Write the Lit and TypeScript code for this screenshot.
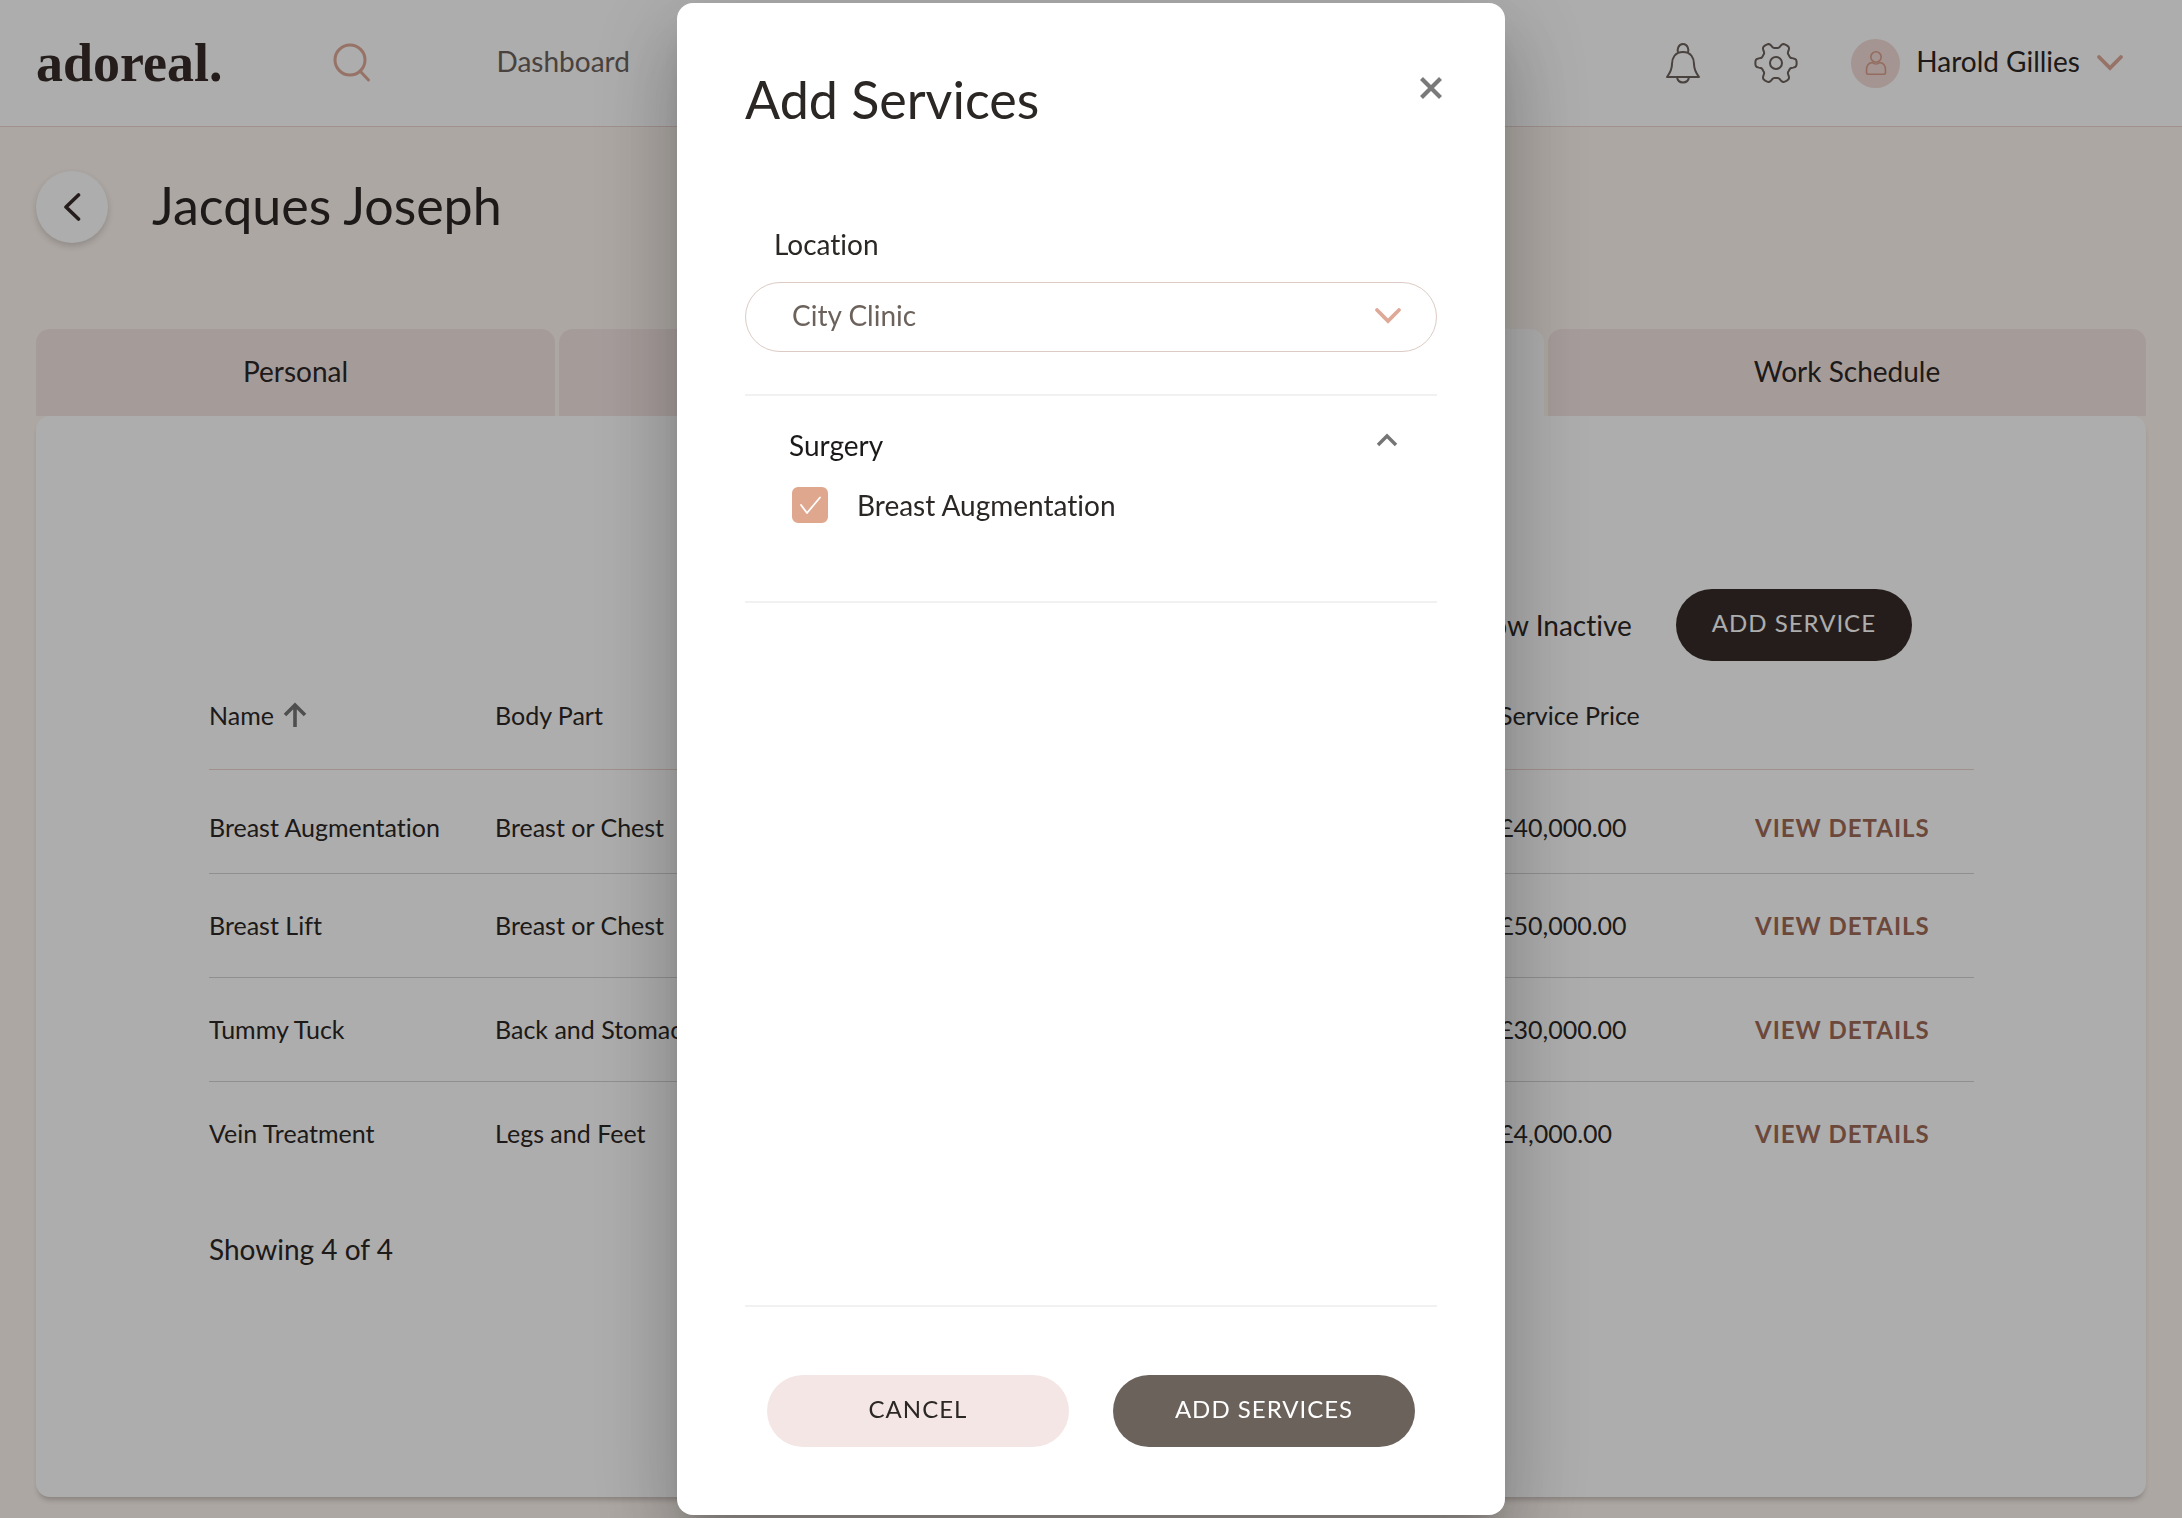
import { LitElement, html, css, svg } from "lit";
import { customElement, property, state } from "lit/decorators.js";

interface Service {
  name: string;
  bodyPart: string;
  price: string;
}

const SERVICES: Service[] = [
  { name: "Breast Augmentation", bodyPart: "Breast or Chest", price: "£40,000.00" },
  { name: "Breast Lift", bodyPart: "Breast or Chest", price: "£50,000.00" },
  { name: "Tummy Tuck", bodyPart: "Back and Stomach", price: "£30,000.00" },
  { name: "Vein Treatment", bodyPart: "Legs and Feet", price: "£4,000.00" },
];

/** Closed outline of a six-lobed gear, centred in a 44 by 44 box. */
function gearOutline(): string {
  const points: string[] = [];
  for (let deg = 0; deg < 360; deg += 3) {
    const a = (deg * Math.PI) / 180;
    const r = 17.8 + 2.9 * Math.tanh(2.2 * Math.cos(6 * a));
    points.push(`${(22 + r * Math.cos(a)).toFixed(2)} ${(22 + r * Math.sin(a)).toFixed(2)}`);
  }
  return `M${points.join("L")}Z`;
}

const icons = {
  search: svg`<svg width="38" height="40" viewBox="0 0 38 40" fill="none" stroke="#dfa997" stroke-width="3" stroke-linecap="round" aria-hidden="true"><circle cx="17" cy="17" r="15"/><path d="M27 28 35.500 37"/></svg>`,
  bell: svg`<svg width="36" height="42" viewBox="0 0 36 42" fill="none" stroke="#6c625c" stroke-width="2" stroke-linejoin="round" aria-hidden="true"><path d="M13 10.500C12 8 13 2 18 2s6 6 5 8.500"/><path d="M18 10C10 10 7 16 7 22c0 6-2 9-5 13h32c-3-4-5-7-5-13 0-6-3-12-11-12Z"/><path d="M12 35c.5 3.500 3 5.500 6 5.500s5.500-2 6-5.500"/></svg>`,
  gear: svg`<svg width="44" height="44" viewBox="0 0 44 44" fill="none" stroke="#6c625c" stroke-width="2" stroke-linejoin="round" aria-hidden="true"><path d=${gearOutline()}/><circle cx="22" cy="22" r="6"/></svg>`,
  user: svg`<svg width="24" height="26" viewBox="0 0 24 26" fill="none" stroke="#d9a08c" stroke-width="1.600" stroke-linejoin="round" aria-hidden="true"><circle cx="12" cy="7" r="5.200"/><path d="M8.200 12.500C4.500 13 2.500 16 2.500 20v2.500c0 1 .8 1.700 1.700 1.700h15.600c.9 0 1.700-.7 1.700-1.700V20c0-4-2-7-5.700-7.500-2.200 2-5.400 2-7.600 0Z"/></svg>`,
  chevronDown: svg`<svg width="28" height="18" viewBox="0 0 28 18" fill="none" stroke="#dfa997" stroke-width="3.800" stroke-linecap="round" aria-hidden="true"><path d="m3 3 11 11L25 3"/></svg>`,
  chevronUp: svg`<svg width="22" height="14" viewBox="0 0 22 14" fill="none" stroke="#757575" stroke-width="3.400" aria-hidden="true"><path d="m2 12 9-9 9 9"/></svg>`,
  back: svg`<svg width="18" height="30" viewBox="0 0 18 30" fill="none" stroke="#372c28" stroke-width="3.600" stroke-linecap="round" stroke-linejoin="round" aria-hidden="true"><path d="M15.500 3 3 15l12.500 12"/></svg>`,
  close: svg`<svg width="24" height="24" viewBox="0 0 24 24" fill="none" stroke="#7a7a7a" stroke-width="4.200" aria-hidden="true"><path d="m2.500 2.500 19 19M21.500 2.500l-19 19"/></svg>`,
  arrowUp: svg`<svg width="24" height="26" viewBox="0 0 24 26" fill="none" stroke="#757575" stroke-width="3.600" aria-hidden="true"><path d="M12 25V4M2 13 12 3l10 10"/></svg>`,
  tick: svg`<svg class="tick" width="36" height="36" viewBox="0 0 36 36" fill="none" stroke="#fff" stroke-width="1.800" stroke-linecap="round" stroke-linejoin="round" aria-hidden="true"><path d="m9 18 6 8L28 10.500"/></svg>`,
};

const base = css`
  :host {
    font-family: Lato, "Liberation Sans", sans-serif;
    font-variant-ligatures: none;
    color: #2b2725;
    font-size: 28px;
    line-height: 36px;
  }
  *,
  *::before,
  *::after {
    box-sizing: border-box;
  }
  svg {
    display: block;
    flex: none;
  }
  button,
  select {
    font: inherit;
    font-variant-ligatures: none;
    color: inherit;
    border: 0;
    padding: 0;
    background: none;
    cursor: pointer;
  }
  h1,
  h2 {
    margin: 0;
    font-size: 52px;
    line-height: 56px;
    font-weight: 400;
  }
  .pill {
    height: 72px;
    border-radius: 36px;
    padding: 0 36px 4px;
    font-size: 24px;
    letter-spacing: 1px;
    text-transform: uppercase;
  }
`;

@customElement("site-header")
class SiteHeader extends LitElement {
  static styles = [
    base,
    css`
      :host {
        display: block;
      }
      .bar {
        display: flex;
        align-items: center;
        height: 127px;
        padding: 0 58px 0 36px;
        background: #fff;
        border-bottom: 1px solid #ecd6d0;
      }
      .logo {
        font: 700 54px/60px "Liberation Serif", serif;
        color: #372c28;
        text-decoration: none;
      }
      .search {
        margin-left: 110px;
      }
      .nav {
        flex: 1;
        padding: 0 0 4px 126px;
      }
      .link {
        color: #6c625c;
        text-decoration: none;
      }
      .actions {
        display: flex;
        align-items: center;
        gap: 53px;
      }
      .account {
        display: flex;
        align-items: center;
        gap: 16px;
      }
      .user {
        padding-bottom: 4px;
      }
      .avatar {
        display: grid;
        place-items: center;
        width: 49px;
        height: 49px;
        border-radius: 50%;
        background: #f2dcd7;
      }
    `,
  ];

  render() {
    return html`
      <header class="bar">
        <a class="logo" href="#">adoreal.</a>
        <button class="search" aria-label="Search">${icons.search}</button>
        <nav class="nav"><a class="link" href="#">Dashboard</a></nav>
        <div class="actions">
          <button aria-label="Notifications">${icons.bell}</button>
          <button aria-label="Settings">${icons.gear}</button>
          <button class="account">
            <span class="avatar">${icons.user}</span>
            <span class="user">Harold Gillies</span>
            ${icons.chevronDown}
          </button>
        </div>
      </header>
    `;
  }
}

@customElement("services-card")
class ServicesCard extends LitElement {
  @property({ attribute: false }) services: Service[] = [];

  static styles = [
    base,
    css`
      :host {
        display: block;
        padding: 173px 172px 40px 173px;
        background: #fff;
        border-radius: 14px;
        box-shadow: 0 5px 5px -2px rgba(55, 44, 40, 0.25);
      }
      .toolbar {
        display: flex;
        align-items: center;
        justify-content: flex-end;
        gap: 44px;
        padding-right: 62px;
      }
      .add {
        background: #372c28;
        color: #fff;
      }
      .table {
        width: 100%;
        table-layout: fixed;
        border-collapse: collapse;
        font-size: 25px;
        line-height: 32px;
        text-align: left;
      }
      .col-name {
        width: 286px;
      }
      .col-price {
        width: 256px;
      }
      .col-action {
        width: 219px;
      }
      .head,
      .cell {
        height: 104px;
        padding: 0;
        font-weight: 400;
        border-bottom: 1px solid #d6d3d2;
      }
      .head {
        height: 108px;
        border-color: #ecd6d0;
      }
      .row:first-child .cell {
        padding-top: 12px;
      }
      .row:last-child .cell {
        border-bottom: 0;
      }
      .sort {
        display: flex;
        align-items: center;
        gap: 9px;
      }
      .details {
        color: #a06a58;
        font-size: 24px;
        font-weight: 700;
        letter-spacing: 1px;
        text-transform: uppercase;
        text-decoration: none;
      }
      .count {
        margin: 46px 0 0;
      }
    `,
  ];

  render() {
    return html`
      <div class="toolbar">
        <span>Show Inactive</span>
        <button class="pill add">Add Service</button>
      </div>
      <table class="table">
        <colgroup>
          <col class="col-name" />
          <col />
          <col class="col-price" />
          <col class="col-action" />
        </colgroup>
        <thead>
          <tr>
            <th class="head" scope="col"><button class="sort">Name ${icons.arrowUp}</button></th>
            <th class="head" scope="col">Body Part</th>
            <th class="head" scope="col">Service Price</th>
            <td class="head"></td>
          </tr>
        </thead>
        <tbody>
          ${this.services.map(
            (s) => html`
              <tr class="row">
                <td class="cell">${s.name}</td>
                <td class="cell">${s.bodyPart}</td>
                <td class="cell">${s.price}</td>
                <td class="cell"><a class="details" href="#">View Details</a></td>
              </tr>
            `,
          )}
        </tbody>
      </table>
      <p class="count">Showing ${this.services.length} of ${this.services.length}</p>
    `;
  }
}

@customElement("add-services-dialog")
class AddServicesDialog extends LitElement {
  @state() private open = true;
  @state() private checked = true;

  static styles = [
    base,
    css`
      :host {
        position: fixed;
        inset: 0;
        display: flex;
        justify-content: center;
        padding: 3px;
        background: rgba(0, 0, 0, 0.32);
      }
      .dialog {
        display: flex;
        flex-direction: column;
        width: 100%;
        max-width: 828px;
        padding: 68px;
        background: #fff;
        border-radius: 16px;
        box-shadow:
          0 22px 30px -14px rgba(0, 0, 0, 0.2),
          0 48px 76px 6px rgba(0, 0, 0, 0.14),
          0 18px 92px 16px rgba(0, 0, 0, 0.12);
      }
      .top {
        display: flex;
        justify-content: space-between;
        align-items: flex-start;
      }
      .close {
        margin: 5px -6px 0 0;
      }
      .label {
        margin: 99px 0 0 29px;
      }
      .field {
        display: grid;
        align-items: center;
        margin-top: 20px;
      }
      .field > * {
        grid-area: 1 / 1;
      }
      .select {
        appearance: none;
        width: 100%;
        height: 70px;
        padding: 0 72px 4px 46px;
        border: 1px solid #dccbc5;
        border-radius: 35px;
        color: #6c625c;
      }
      .field svg {
        justify-self: end;
        margin: 0 35px 2px 0;
        pointer-events: none;
      }
      .group {
        margin-top: 42px;
        padding: 31px 39px 78px 44px;
        border-top: 2px solid #f1f1f1;
        border-bottom: 2px solid #f1f1f1;
      }
      .toggle {
        display: flex;
        align-items: flex-start;
        justify-content: space-between;
        width: 100%;
        color: #1c1a19;
      }
      .toggle svg {
        margin-top: 6px;
      }
      .option {
        display: flex;
        align-items: center;
        gap: 29px;
        margin-top: 24px;
        padding-left: 3px;
      }
      .check {
        display: grid;
      }
      .check > * {
        grid-area: 1 / 1;
      }
      .box {
        appearance: none;
        width: 36px;
        height: 36px;
        margin: 0;
        border: 2px solid #e0a78f;
        border-radius: 6px;
      }
      .box:checked {
        background: #e0a78f;
      }
      .tick {
        pointer-events: none;
      }
      .footer {
        display: flex;
        gap: 44px;
        margin-top: auto;
        padding: 68px 22px 0;
        border-top: 2px solid #f1f1f1;
      }
      .footer .pill {
        flex: 1;
      }
      .cancel {
        background: #f4e6e4;
      }
      .submit {
        background: #6c625c;
        color: #fff;
      }
    `,
  ];

  render() {
    return html`
      <section class="dialog" role="dialog" aria-modal="true" aria-labelledby="title">
        <div class="top">
          <h2 id="title">Add Services</h2>
          <button class="close" aria-label="Close">${icons.close}</button>
        </div>
        <label class="label" for="location">Location</label>
        <div class="field">
          <select class="select" id="location">
            <option>City Clinic</option>
          </select>
          ${icons.chevronDown}
        </div>
        <div class="group">
          <button class="toggle" aria-expanded=${this.open} @click=${() => (this.open = !this.open)}>
            <span>Surgery</span>${icons.chevronUp}
          </button>
          ${this.open
            ? html`<label class="option">
                <span class="check">
                  <input
                    class="box"
                    type="checkbox"
                    .checked=${this.checked}
                    @change=${(e: Event) => (this.checked = (e.target as HTMLInputElement).checked)}
                  />
                  ${this.checked ? icons.tick : null}
                </span>
                <span>Breast Augmentation</span>
              </label>`
            : null}
        </div>
        <div class="footer">
          <button class="pill cancel">Cancel</button>
          <button class="pill submit">Add Services</button>
        </div>
      </section>
    `;
  }
}

@customElement("app-root")
class AppRoot extends LitElement {
  static styles = [
    base,
    css`
      :host {
        display: flex;
        flex-direction: column;
        min-height: 100vh;
        background: #fef6f0;
      }
      .main {
        flex: 1;
        display: flex;
        flex-direction: column;
        padding: 44px 36px 21px;
      }
      .heading {
        display: flex;
        align-items: center;
        gap: 44px;
      }
      h1 {
        padding-bottom: 4px;
      }
      .back {
        display: grid;
        place-items: center;
        width: 72px;
        height: 72px;
        border-radius: 50%;
        background: #fff;
        box-shadow: 0 3px 6px rgba(55, 44, 40, 0.2);
      }
      .tabs {
        display: grid;
        grid-template-columns: 519fr 420fr 561fr 598fr;
        gap: 4px;
        margin-top: 86px;
      }
      .tab {
        height: 87px;
        padding-bottom: 3px;
        border-radius: 14px 14px 0 0;
        background: #f4e6e4;
      }
      .tab.active {
        background: #fff;
      }
      .card {
        flex: 1;
      }
    `,
  ];

  render() {
    return html`
      <site-header></site-header>
      <main class="main">
        <div class="heading">
          <button class="back" aria-label="Back">${icons.back}</button>
          <h1>Jacques Joseph</h1>
        </div>
        <div class="tabs">
          <button class="tab">Personal</button>
          <div class="tab"></div>
          <div class="tab active"></div>
          <button class="tab">Work Schedule</button>
        </div>
        <services-card class="card" .services=${SERVICES}></services-card>
      </main>
      <add-services-dialog></add-services-dialog>
    `;
  }
}
